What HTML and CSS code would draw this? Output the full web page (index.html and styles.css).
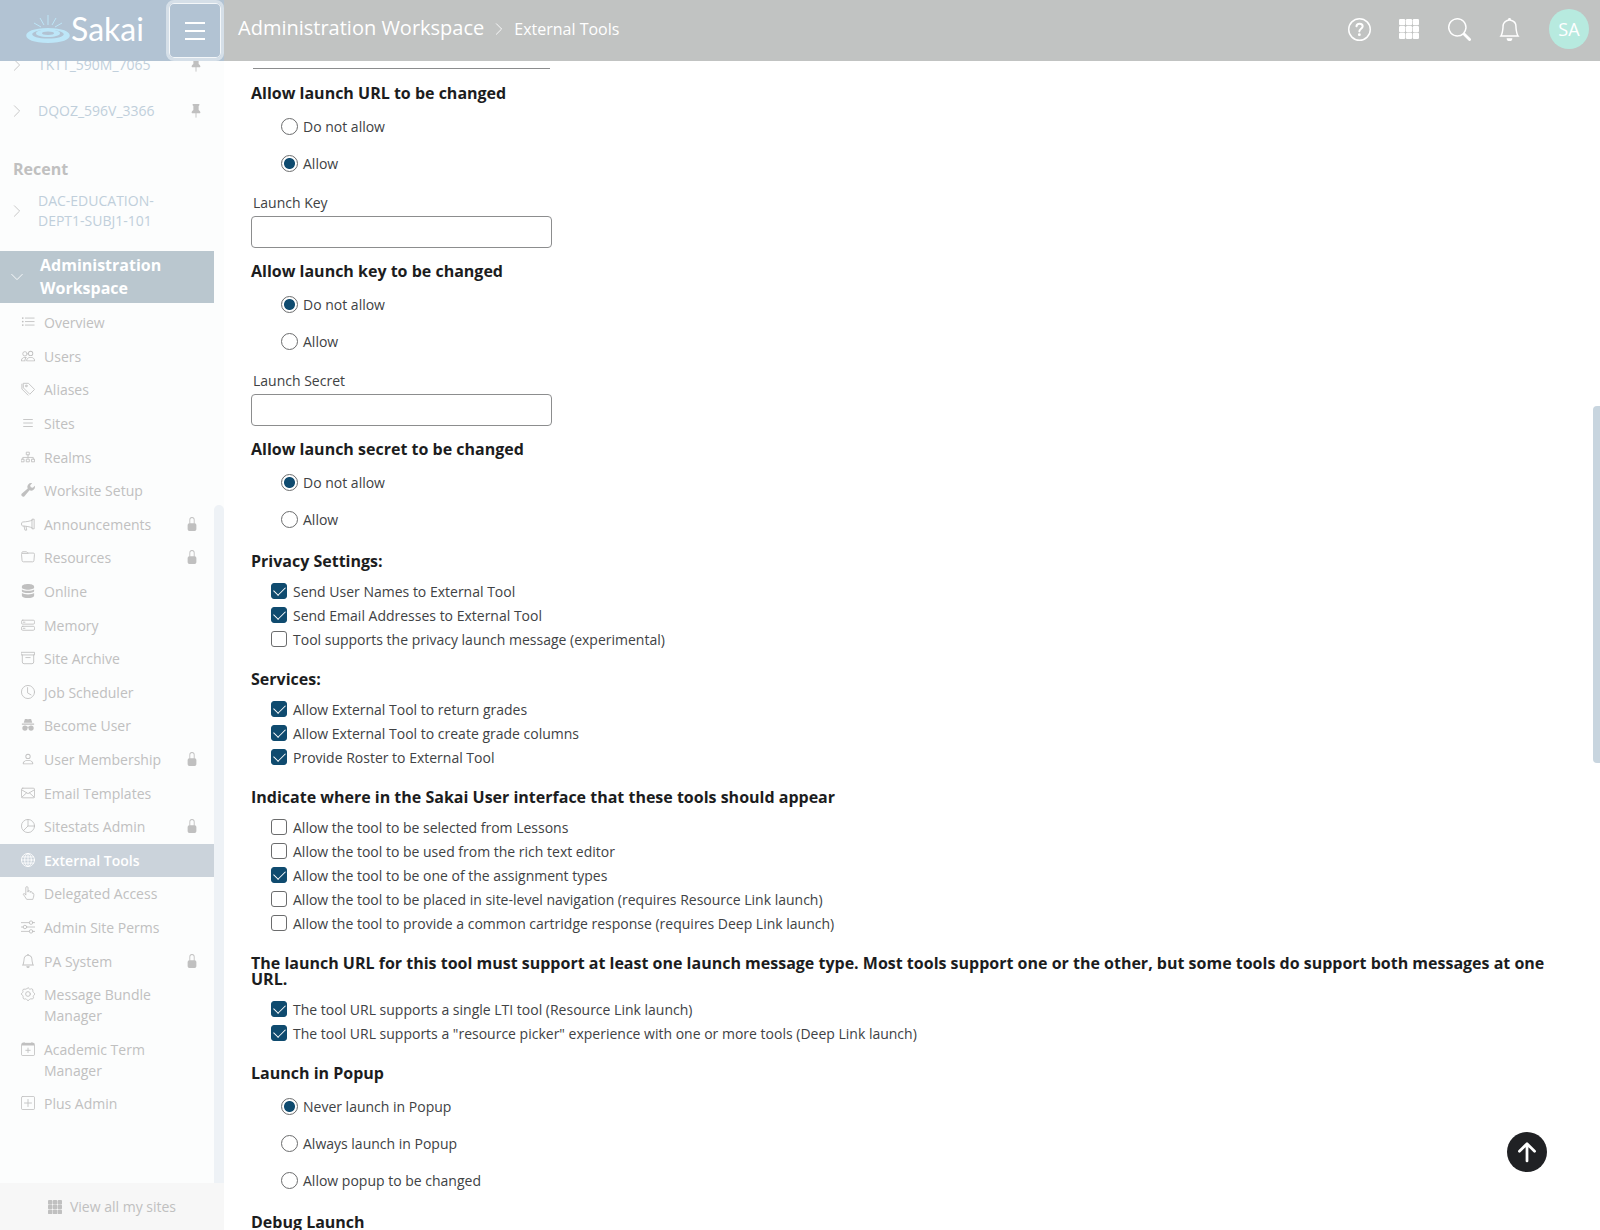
FILE: index.html
```
<!DOCTYPE html>
<html lang="en">
  <head>
    <meta charset="UTF-8" />
    <meta name="viewport" content="width=device-width, initial-scale=1.0" />
    <title>Sakai : Administration Workspace : External Tools</title>
    <link rel="stylesheet" href="styles.css" />
  </head>
  <body>
    <!-- icon set -->
    <svg class="sprite" aria-hidden="true">
      <symbol id="i-right" viewBox="0 0 16 16"><path class="s" d="M5 2l6 6-6 6" /></symbol>
      <symbol id="i-down" viewBox="0 0 16 16"><path class="s" d="M2 5l6 6 6-6" /></symbol>
      <symbol id="i-pin" viewBox="0 0 16 16"><path d="M4 .5A.5.5 0 0 1 4.500 0h7a.5.5 0 0 1 .5.5c0 .68-.34 1.170-.650 1.470L11 2.280v4.600c.8.500 2 1.400 2 3.120a.5.5 0 0 1-.5.5h-4v4.500L8 16l-.5-1v-4.500h-4A.5.5 0 0 1 3 10c0-1.600 1.200-2.620 2-3.120v-4.600C4.600 2 4 1.400 4 .5" /></symbol>
      <symbol id="i-lock" viewBox="0 0 16 16"><path d="M8 1a2 2 0 0 1 2 2v4H6V3a2 2 0 0 1 2-2m3 6V3a3 3 0 0 0-6 0v4a2 2 0 0 0-2 2v5a2 2 0 0 0 2 2h6a2 2 0 0 0 2-2V9a2 2 0 0 0-2-2" /></symbol>
      <symbol id="i-list-ul" viewBox="0 0 16 16"><path class="s" d="M5 3.500h10M5 7.500h10M5 11.500h10" /><circle cx="2" cy="3.500" r="1" /><circle cx="2" cy="7.500" r="1" /><circle cx="2" cy="11.500" r="1" /></symbol>
      <symbol id="i-list" viewBox="0 0 16 16"><path class="s" d="M3 4h10M3 8h10M3 12h10" /></symbol>
      <symbol id="i-people" viewBox="0 0 16 16"><path d="M15 14s1 0 1-1-1-4-5-4-5 3-5 4 1 1 1 1zm-7.978-1L7 12.996c.001-.264.167-1.030.76-1.720C8.312 10.629 9.282 10 11 10c1.717 0 2.687.63 3.240 1.276.593.69.758 1.457.76 1.720l-.022.004zM11 7a2 2 0 1 0 0-4 2 2 0 0 0 0 4m3-2a3 3 0 1 1-6 0 3 3 0 0 1 6 0M6.936 9.280A7 7 0 0 0 5 9c-4 0-5 3-5 4q0 1 1 1h4.216A2.240 2.240 0 0 1 5 13c0-1.010.377-2.042 1.090-2.904.243-.294.526-.569.846-.816M4.920 10A5.500 5.500 0 0 0 4 13H1c0-.26.164-1.030.76-1.724.545-.636 1.492-1.256 3.160-1.276" /><circle class="s" cx="4.500" cy="5.500" r="2.500" /></symbol>
      <symbol id="i-tags" viewBox="0 0 16 16"><path class="s" d="M3 1.500h5.500l7 7-5.500 5.500-7-7zM1 2.500v5.500l7 7" /><circle class="s" cx="6" cy="4.500" r="1" /></symbol>
      <symbol id="i-tree" viewBox="0 0 16 16"><path class="s" d="M6.500 2.500h3v3h-3zM8 5.500v4M2 10.500v-2h12v2M.5 10.500h3v3h-3zM6.500 10.500h3v3h-3zM12.500 10.500h3v3h-3z" /></symbol>
      <symbol id="i-wrench" viewBox="0 0 16 16"><path d="M15.800 3.200A4.400 4.400 0 0 1 9.700 8.300l-6 7a2.200 2.200 0 0 1-3-3l7-6A4.400 4.400 0 0 1 12.800.2L10.500 2.500l.6 2.400 2.400.6z" /></symbol>
      <symbol id="i-megaphone" viewBox="0 0 16 16"><path class="s" d="M13 2.500h2v11h-2zM13 3.500C10 5 6 5.500 2 5.700q-1.500.3-1.500 2.300T2 10.300c4 .2 8 .7 11 2.200M3.500 10.500l1 4.500h2l-.7-4" /></symbol>
      <symbol id="i-folder" viewBox="0 0 16 16"><path class="s" d="M1 4V3q0-1 1-1h4l2 1.500h6q1.500 0 1.400 1.500l-.6 7q-.1 1.500-1.500 1.500H2.700q-1.400 0-1.500-1.500L.6 5.200Q.6 3.900 2 3.900h6" /></symbol>
      <symbol id="i-database" viewBox="0 0 16 16"><path d="M1 3c0-4 14-4 14 0v1c0 3.300-14 3.300-14 0zM1 6.200c2 2 12 2 14 0V8c0 3.200-14 3.200-14 0zM1 10.400c2 2 12 2 14 0V13c0 4-14 4-14 0z" /></symbol>
      <symbol id="i-hdd" viewBox="0 0 16 16"><rect class="s" x=".5" y="2.500" width="15" height="4.500" rx="1.500" /><rect class="s" x=".5" y="9.500" width="15" height="4.500" rx="1.500" /><path class="s" d="M2.500 4.800h2M2.500 11.800h2" /></symbol>
      <symbol id="i-archive" viewBox="0 0 16 16"><path class="s" d="M.5 1.500h15v3H.5zM1.500 4.500v8q0 2 2 2h9q2 0 2-2v-8M5.500 7.500h5" /></symbol>
      <symbol id="i-clock" viewBox="0 0 16 16"><circle class="s" cx="8" cy="8" r="7.500" /><path class="s" d="M7.500 3v6l4 2.300" /></symbol>
      <symbol id="i-incognito" viewBox="0 0 16 16"><path d="M4.500 1h2.300q1.200.6 2.400 0h2.300l1.400 4.500H3.100zM1 6.200h14v1.600H1z" /><circle cx="4.500" cy="11.500" r="3" /><circle cx="11.500" cy="11.500" r="3" /><path class="s" d="M7 10.500h2" /></symbol>
      <symbol id="i-person" viewBox="0 0 16 16"><path d="M8 8a3 3 0 1 0 0-6 3 3 0 0 0 0 6m2-3a2 2 0 1 1-4 0 2 2 0 0 1 4 0m4 8c0 1-1 1-1 1H3s-1 0-1-1 1-4 6-4 6 3 6 4m-1 0c0-.250-.154-.986-.832-1.668C11.516 10.680 10.289 10 8 10s-3.516.68-4.168 1.332C3.154 12.014 3 12.750 3 13z" /></symbol>
      <symbol id="i-mail" viewBox="0 0 16 16"><rect class="s" x=".5" y="2.500" width="15" height="11" rx="1.500" /><path class="s" d="M1 4.500l7 4.200 7-4.200M1 12.700l5.500-5M15 12.700l-5.500-5" /></symbol>
      <symbol id="i-pie" viewBox="0 0 16 16"><circle class="s" cx="8" cy="8" r="7.500" /><path class="s" d="M8 .5V8l-5.300 5.300M8 8h7.500" /></symbol>
      <symbol id="i-globe" viewBox="0 0 16 16"><circle class="s" cx="8" cy="8" r="7.500" /><ellipse class="s" cx="8" cy="8" rx="3.800" ry="7.500" /><path class="s" d="M8 .5v15M.5 8h15M1.500 4.500h13M1.500 11.500h13" /></symbol>
      <symbol id="i-hand" viewBox="0 0 16 16"><path class="s" d="M5.500 10V2a1.200 1.200 0 0 1 2.500 0v5-1.500q2-.8 2.500.8v1-.6q2-.8 2.300.8v.8q1.900-.5 1.900 1.200c0 3-.7 3.800-1.200 5.800h-7C5.500 13 3.500 11.500 2.600 9.500c0-1 1.300-1.400 2.900.5" /></symbol>
      <symbol id="i-sliders" viewBox="0 0 16 16"><path class="s" d="M0 3h9.500M13.500 3H16M0 8h2.500M6.500 8H16M0 13h9.500M13.500 13H16" /><circle class="s" cx="11.500" cy="3" r="2" /><circle class="s" cx="4.500" cy="8" r="2" /><circle class="s" cx="11.500" cy="13" r="2" /></symbol>
      <symbol id="i-bell" viewBox="0 0 16 16"><path d="M8 16a2 2 0 0 0 2-2H6a2 2 0 0 0 2 2M8 1.918l-.797.161A4 4 0 0 0 4 6c0 .628-.134 2.197-.459 3.742-.16.767-.376 1.566-.663 2.258h10.244c-.287-.692-.502-1.490-.663-2.258C12.134 8.197 12 6.628 12 6a4 4 0 0 0-3.203-3.920zM14.220 12c.223.447.481.801.78 1H1c.299-.199.557-.553.78-1C2.680 10.200 3 6.880 3 6c0-2.420 1.720-4.440 4.005-4.901a1 1 0 1 1 1.990 0A5 5 0 0 1 13 6c0 .88.32 4.200 1.220 6" /></symbol>
      <symbol id="i-gear" viewBox="0 0 16 16"><circle class="s" cx="8" cy="8" r="2.700" /><path class="s" d="M6.600 2Q8-1 9.400 2q.5.800 1.400.4 3-1.500 2.800 2.800.2.900 1 1.200 3 1.600 0 3.200-.8.500-.6 1.400 1.200 3-2.800 2.600-1-.2-1.400.6-1.800 3-3.400 0-.5-.8-1.200-.6-3.200 1-2.800-2.800 0-1-.8-1.300-2.800-1.600 0-3 .8-.5.700-1.400Q1 2 5 2.500 6.100 2.800 6.600 2" /></symbol>
      <symbol id="i-calendar" viewBox="0 0 16 16"><rect class="s" x=".5" y="1.500" width="15" height="14" rx="1.500" /><path d="M1 1h14v3H1zM3 0h1v2H3zM12 0h1v2h-1z" /><path class="s" d="M8 7v5M5.500 9.500h5" /></symbol>
      <symbol id="i-plus" viewBox="0 0 16 16"><rect class="s" x=".5" y=".5" width="15" height="15" rx="1.500" /><path class="s" d="M8 4v8M4 8h8" /></symbol>
      <symbol id="i-grid" viewBox="0 0 16 16"><rect x="0" y="0" width="5" height="5" rx="1" /><rect x="5.500" y="0" width="5" height="5" rx="1" /><rect x="11" y="0" width="5" height="5" rx="1" /><rect x="0" y="5.500" width="5" height="5" rx="1" /><rect x="5.500" y="5.500" width="5" height="5" rx="1" /><rect x="11" y="5.500" width="5" height="5" rx="1" /><rect x="0" y="11" width="5" height="5" rx="1" /><rect x="5.500" y="11" width="5" height="5" rx="1" /><rect x="11" y="11" width="5" height="5" rx="1" /></symbol>
      <symbol id="i-search" viewBox="0 0 16 16"><path d="M11.742 10.344a6.500 6.500 0 1 0-1.397 1.398q.044.06.097.115l3.850 3.850a1 1 0 0 0 1.415-1.414l-3.850-3.850a1 1 0 0 0-.115-.1M12 6.500a5.500 5.500 0 1 1-11 0 5.500 5.500 0 0 1 11 0" /></symbol>
      <symbol id="i-help" viewBox="0 0 16 16"><circle class="s" cx="8" cy="8" r="7.500" /><path class="s query" d="M5.900 5.800C6 3.300 10.200 3.400 10.200 5.800c0 1.700-2.300 1.700-2.300 3.500" /><circle cx="7.900" cy="11.600" r="1" /></symbol>
      <symbol id="i-up" viewBox="0 0 16 16"><path class="s thick" d="M8 14.500V2M2.500 7.500L8 2l5.500 5.500" /></symbol>
    </svg>

    <header class="topbar">
      <div class="brand">
        <a href="#" class="logo" aria-label="Sakai">
          <svg class="ripple" viewBox="0 0 45 30" aria-hidden="true">
            <path class="rays" d="M22 1v10M14 4l4 7M30 4l-4 7M8 9l7 4M36 9l-7 4" />
            <path d="M22 14c29 0 29 15 0 15s-29-15 0-15m0 2c-21 0-21 8.500 0 8.500s21-8.500 0-8.500" />
            <path d="M22 15.500c16 0 16 7.500 0 7.500s-16-7.500 0-7.500m0 2c-8 0-8 3.500 0 3.500s8-3.500 0-3.500" />
          </svg>
          <span>Sakai</span>
        </a>
        <button type="button" class="menu-button" aria-label="Toggle sidebar">
          <svg viewBox="0 0 20 18"><path d="M0 1h20M0 9h20M0 17h20" /></svg>
        </button>
      </div>
      <nav class="breadcrumb" aria-label="Breadcrumb">
        <a href="#" class="crumb-site">Administration Workspace</a>
        <svg class="icon"><use href="#i-right" /></svg>
        <a href="#" class="crumb-tool">External Tools</a>
      </nav>
      <div class="tools">
        <button type="button" aria-label="Help"><svg><use href="#i-help" /></svg></button>
        <button type="button" aria-label="Sites"><svg class="grid-icon"><use href="#i-grid" /></svg></button>
        <button type="button" aria-label="Search"><svg><use href="#i-search" /></svg></button>
        <button type="button" aria-label="Notifications"><svg><use href="#i-bell" /></svg></button>
        <button type="button" class="avatar">SA</button>
      </div>
    </header>

    <div class="page">
      <aside class="sidebar">
        <div class="sidebar-scroll">
          <div class="sidebar-content">
            <div class="site"><svg class="icon"><use href="#i-right" /></svg><a href="#">TKTT_590M_7065</a><svg class="icon"><use href="#i-pin" /></svg></div>
            <div class="site"><svg class="icon"><use href="#i-right" /></svg><a href="#">DQOZ_596V_3366</a><svg class="icon"><use href="#i-pin" /></svg></div>
            <h2>Recent</h2>
            <div class="site recent"><svg class="icon"><use href="#i-right" /></svg><a href="#">DAC-EDUCATION-<br />DEPT1-SUBJ1-101</a></div>
            <div class="current-site"><svg class="icon"><use href="#i-down" /></svg><a href="#">Administration Workspace</a></div>
            <ul class="tool-list">
              <li><svg class="icon"><use href="#i-list-ul" /></svg><a href="#">Overview</a></li>
              <li><svg class="icon"><use href="#i-people" /></svg><a href="#">Users</a></li>
              <li><svg class="icon"><use href="#i-tags" /></svg><a href="#">Aliases</a></li>
              <li><svg class="icon"><use href="#i-list" /></svg><a href="#">Sites</a></li>
              <li><svg class="icon"><use href="#i-tree" /></svg><a href="#">Realms</a></li>
              <li><svg class="icon"><use href="#i-wrench" /></svg><a href="#">Worksite Setup</a></li>
              <li><svg class="icon"><use href="#i-megaphone" /></svg><a href="#">Announcements</a><svg class="icon lock"><use href="#i-lock" /></svg></li>
              <li><svg class="icon"><use href="#i-folder" /></svg><a href="#">Resources</a><svg class="icon lock"><use href="#i-lock" /></svg></li>
              <li><svg class="icon"><use href="#i-database" /></svg><a href="#">Online</a></li>
              <li><svg class="icon"><use href="#i-hdd" /></svg><a href="#">Memory</a></li>
              <li><svg class="icon"><use href="#i-archive" /></svg><a href="#">Site Archive</a></li>
              <li><svg class="icon"><use href="#i-clock" /></svg><a href="#">Job Scheduler</a></li>
              <li><svg class="icon"><use href="#i-incognito" /></svg><a href="#">Become User</a></li>
              <li><svg class="icon"><use href="#i-person" /></svg><a href="#">User Membership</a><svg class="icon lock"><use href="#i-lock" /></svg></li>
              <li><svg class="icon"><use href="#i-mail" /></svg><a href="#">Email Templates</a></li>
              <li><svg class="icon"><use href="#i-pie" /></svg><a href="#">Sitestats Admin</a><svg class="icon lock"><use href="#i-lock" /></svg></li>
              <li class="active"><svg class="icon"><use href="#i-globe" /></svg><a href="#">External Tools</a></li>
              <li><svg class="icon"><use href="#i-hand" /></svg><a href="#">Delegated Access</a></li>
              <li><svg class="icon"><use href="#i-sliders" /></svg><a href="#">Admin Site Perms</a></li>
              <li><svg class="icon"><use href="#i-bell" /></svg><a href="#">PA System</a><svg class="icon lock"><use href="#i-lock" /></svg></li>
              <li><svg class="icon"><use href="#i-gear" /></svg><a href="#">Message Bundle<br />Manager</a></li>
              <li><svg class="icon"><use href="#i-calendar" /></svg><a href="#">Academic Term<br />Manager</a></li>
              <li><svg class="icon"><use href="#i-plus" /></svg><a href="#">Plus Admin</a></li>
            </ul>
          </div>
          <div class="sidebar-thumb"></div>
        </div>
        <button type="button" class="all-sites"><svg class="icon"><use href="#i-grid" /></svg>View all my sites</button>
      </aside>

      <main class="content">
        <form class="tool-form">
          <div class="field first-field">
            <input type="text" id="launch-url" aria-label="Launch URL" />
          </div>

          <h3>Allow launch URL to be changed</h3>
          <div class="radios">
            <label><input type="radio" name="allowlaunch" />Do not allow</label>
            <label><input type="radio" name="allowlaunch" checked />Allow</label>
          </div>
          <div class="field">
            <label for="launch-key">Launch Key</label>
            <input type="text" id="launch-key" />
          </div>

          <h3>Allow launch key to be changed</h3>
          <div class="radios">
            <label><input type="radio" name="allowkey" checked />Do not allow</label>
            <label><input type="radio" name="allowkey" />Allow</label>
          </div>
          <div class="field">
            <label for="launch-secret">Launch Secret</label>
            <input type="text" id="launch-secret" />
          </div>

          <h3>Allow launch secret to be changed</h3>
          <div class="radios last">
            <label><input type="radio" name="allowsecret" checked />Do not allow</label>
            <label><input type="radio" name="allowsecret" />Allow</label>
          </div>

          <h3>Privacy Settings:</h3>
          <div class="checks">
            <label><input type="checkbox" checked />Send User Names to External Tool</label>
            <label><input type="checkbox" checked />Send Email Addresses to External Tool</label>
            <label><input type="checkbox" />Tool supports the privacy launch message (experimental)</label>
          </div>

          <h3>Services:</h3>
          <div class="checks">
            <label><input type="checkbox" checked />Allow External Tool to return grades</label>
            <label><input type="checkbox" checked />Allow External Tool to create grade columns</label>
            <label><input type="checkbox" checked />Provide Roster to External Tool</label>
          </div>

          <h3>Indicate where in the Sakai User interface that these tools should appear</h3>
          <div class="checks">
            <label><input type="checkbox" />Allow the tool to be selected from Lessons</label>
            <label><input type="checkbox" />Allow the tool to be used from the rich text editor</label>
            <label><input type="checkbox" checked />Allow the tool to be one of the assignment types</label>
            <label><input type="checkbox" />Allow the tool to be placed in site-level navigation (requires Resource Link launch)</label>
            <label><input type="checkbox" />Allow the tool to provide a common cartridge response (requires Deep Link launch)</label>
          </div>

          <h3>The launch URL for this tool must support at least one launch message type. Most tools support one or the other, but some tools do support both messages at one URL.</h3>
          <div class="checks">
            <label><input type="checkbox" checked />The tool URL supports a single LTI tool (Resource Link launch)</label>
            <label><input type="checkbox" checked />The tool URL supports a "resource picker" experience with one or more tools (Deep Link launch)</label>
          </div>

          <h3>Launch in Popup</h3>
          <div class="radios last">
            <label><input type="radio" name="popup" checked />Never launch in Popup</label>
            <label><input type="radio" name="popup" />Always launch in Popup</label>
            <label><input type="radio" name="popup" />Allow popup to be changed</label>
          </div>

          <h3>Debug Launch</h3>
        </form>
        <div class="page-thumb"></div>
        <button type="button" class="to-top" aria-label="Back to top"><svg><use href="#i-up" /></svg></button>
      </main>
    </div>
  </body>
</html>
```
FILE: styles.css
```
* {
  box-sizing: border-box;
}

body {
  margin: 0;
  height: 100vh;
  display: flex;
  flex-direction: column;
  overflow: hidden;
  font-family: "Open Sans", "Noto Sans", sans-serif;
  font-size: 14px;
  color: #404244;
  background: #fff;
}

a {
  color: inherit;
  text-decoration: none;
}

button {
  font: inherit;
  color: inherit;
  border: none;
  background: none;
  padding: 0;
  cursor: pointer;
}

.sprite {
  display: none;
}

svg {
  fill: currentColor;
}

.s {
  fill: none;
  stroke: currentColor;
  stroke-width: 1;
  stroke-linecap: round;
  stroke-linejoin: round;
}

.query {
  stroke-width: 1.4;
}

.thick {
  stroke-width: 2;
}

.icon {
  width: 14px;
  height: 14px;
  flex: none;
}

/* top bar */
.topbar {
  flex: none;
  height: 61px;
  display: flex;
  align-items: center;
  background: #c1c3c2;
  color: #fff;
}

.brand {
  width: 224px;
  height: 100%;
  padding-left: 26px;
  display: flex;
  align-items: center;
  justify-content: space-between;
  background: #b2c3d3;
}

.logo {
  display: flex;
  align-items: center;
  padding-bottom: 4px;
  font-family: Lato, sans-serif;
  font-size: 32px;
  line-height: 40px;
}

.ripple {
  width: 45px;
  height: 30px;
  fill: #bde6f8;
}

.ripple .rays {
  fill: none;
  stroke: #bde6f8;
  stroke-width: 1;
}

.menu-button {
  width: 58px;
  height: 61px;
  display: flex;
  align-items: center;
  justify-content: center;
  border: 3px solid #d5dfe8;
  border-radius: 8px;
  box-shadow: inset 0 0 0 1px #f4f7f9;
}

.menu-button svg {
  width: 20px;
  height: 18px;
  stroke: #fff;
  stroke-width: 2;
}

.breadcrumb {
  flex: 1;
  display: flex;
  align-items: center;
  gap: 8px;
  padding: 0 0 3px 14px;
}

.crumb-site {
  font-size: 20px;
  line-height: 28px;
  margin-bottom: 2px;
}

.breadcrumb .icon {
  stroke-width: 1;
}

.crumb-tool {
  font-size: 16px;
  line-height: 22px;
}

.tools {
  display: flex;
  align-items: center;
  padding: 0 11px 3px 0;
}

.tools button {
  width: 50px;
  height: 40px;
  display: flex;
  align-items: center;
  justify-content: center;
}

.tools svg {
  width: 23px;
  height: 23px;
}

.tools .grid-icon {
  width: 20px;
  height: 20px;
}

.tools .avatar {
  width: 40px;
  margin-left: 15px;
  border-radius: 50%;
  background: #b7eadf;
  font-size: 18px;
}

/* sidebar */
.page {
  flex: 1;
  min-height: 0;
  display: flex;
}

.sidebar {
  flex: none;
  width: 224px;
  display: flex;
  flex-direction: column;
  background: #fcfdfd;
  color: #c0c0c0;
}

.sidebar-scroll {
  flex: 1;
  min-height: 0;
  overflow: hidden;
  position: relative;
}

.sidebar-content {
  width: 214px;
  margin-top: -19px;
}

.sidebar-thumb {
  position: absolute;
  top: 444px;
  right: 0;
  bottom: 0;
  width: 10px;
  border-radius: 5px 5px 0 0;
  background: #eef2f6;
}

.site {
  display: flex;
  align-items: center;
  height: 46px;
  padding: 0 11px 0 10px;
  line-height: 20px;
}

.site a {
  flex: 1;
  margin-left: 14px;
  color: #c0cfdb;
}

.sidebar h2 {
  margin: 24px 0 11px 13px;
  font-size: 16px;
  line-height: 22px;
}

.recent {
  height: auto;
}

.current-site {
  display: flex;
  align-items: center;
  gap: 16px;
  margin-top: 20px;
  padding: 3px 40px 3px 10px;
  font-size: 16px;
  font-weight: bold;
  line-height: 23px;
  background: #bac7cf;
  color: #fff;
}

.tool-list {
  list-style: none;
  margin: 3px 0 0;
  padding: 0;
}

.tool-list li {
  display: flex;
  align-items: flex-start;
  padding: 6px 15px 6px 21px;
  line-height: 21px;
}

.tool-list li:nth-child(5n),
.tool-list li:nth-child(5n + 2),
.tool-list li:nth-child(5n + 4) {
  margin-top: 1px;
}

.tool-list a {
  flex: 1;
  margin-left: 9px;
}

.tool-list .icon {
  margin-top: 3px;
}

.tool-list .active {
  background: #cbd3db;
  color: #fff;
  font-weight: 600;
}

.all-sites {
  flex: none;
  height: 47px;
  display: flex;
  align-items: center;
  justify-content: center;
  gap: 8px;
  background: #f7f7f7;
}

/* tool form */
.content {
  flex: 1;
  min-width: 0;
  overflow: hidden;
  position: relative;
}

.tool-form {
  margin-top: -24px;
  padding: 0 40px 0 27px;
}

.tool-form h3 {
  margin: 0;
  font-size: 16px;
  line-height: 16px;
  color: #1c1d1e;
}

.field {
  margin: 11px 0 15px;
}

.field label {
  display: block;
  margin: 0 0 3px 2px;
  line-height: 20px;
}

.field input {
  display: block;
  width: 301px;
  height: 32px;
  border: 1px solid #8c8d8e;
  border-radius: 4px;
  background: #fff;
}

.first-field {
  margin: 0 0 16px;
  padding-left: 2px;
}

.first-field input {
  width: 297px;
  border-width: 0 0 1px;
  border-radius: 0;
}

.radios {
  display: flex;
  flex-direction: column;
  align-items: flex-start;
  padding: 7px 0 0 30px;
}

.radios.last {
  margin-bottom: 15px;
}

.radios label {
  display: flex;
  align-items: center;
  gap: 5px;
  height: 37px;
}

.checks {
  display: flex;
  flex-direction: column;
  align-items: flex-start;
  padding: 10px 0 20px 20px;
}

.checks label {
  display: flex;
  align-items: center;
  gap: 6px;
  height: 24px;
}

.radios input,
.checks input {
  appearance: none;
  width: 16px;
  height: 16px;
  margin: 0;
  border: 1px solid #6b6c6d;
  background: #fff;
}

.radios input {
  width: 17px;
  height: 17px;
  border-radius: 50%;
}

.radios input:checked {
  background: radial-gradient(circle, #0f4b6f 5px, #fff 6px);
}

.checks input {
  border-radius: 3px;
}

.checks input:checked {
  border-color: #0f4b6f;
  background: #0f4b6f;
  display: grid;
  place-items: center;
}

.checks input:checked::before {
  content: "";
  width: 10px;
  height: 6px;
  margin-bottom: 4px;
  border: solid #fff;
  border-width: 0 0 1px 1px;
  transform: rotate(-45deg);
}

.page-thumb {
  position: absolute;
  top: 345px;
  right: 0;
  width: 7px;
  height: 357px;
  border-radius: 4px 0 0 4px;
  background: #c8d5df;
}

.to-top {
  position: absolute;
  right: 53px;
  bottom: 58px;
  width: 40px;
  height: 40px;
  display: flex;
  align-items: center;
  justify-content: center;
  border-radius: 50%;
  background: #202124;
  color: #fff;
}

.to-top svg {
  width: 22px;
  height: 22px;
}
```
